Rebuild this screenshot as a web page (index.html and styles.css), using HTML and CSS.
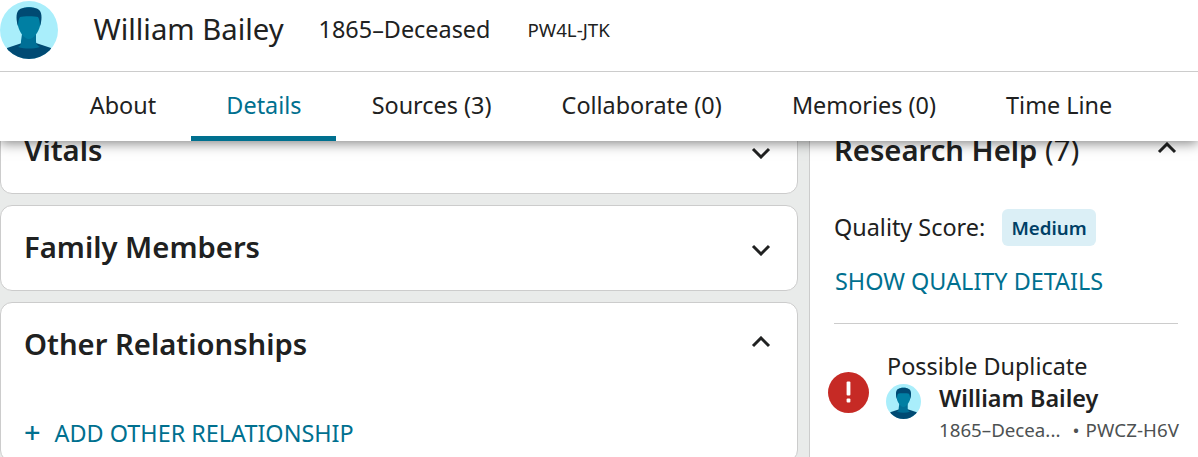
FILE: index.html
```html
<!DOCTYPE html>
<html lang="en">
<head>
  <meta charset="UTF-8">
  <meta name="viewport" content="width=device-width, initial-scale=1.0">
  <title>William Bailey</title>
  <link rel="stylesheet" href="styles.css">
</head>
<body>
  <header class="top">
    <div class="person">
      <svg class="avatar" viewBox="0 0 58 58">
        <use href="#portrait"></use>
      </svg>
      <span class="person-name">William Bailey</span>
      <span class="person-dates">1865–Deceased</span>
      <span class="person-id">PW4L-JTK</span>
    </div>
    <nav class="tabs">
      <a class="tab">About</a>
      <a class="tab tab-active">Details</a>
      <a class="tab">Sources (3)</a>
      <a class="tab">Collaborate (0)</a>
      <a class="tab">Memories (0)</a>
      <a class="tab">Time Line</a>
    </nav>
  </header>

  <main class="content">
    <div class="cards">
      <section class="card card-vitals">
        <h2>Vitals</h2>
        <svg class="chev" viewBox="0 0 20 12"><path d="M2 2l8 8 8-8"/></svg>
      </section>
      <section class="card card-family">
        <h2>Family Members</h2>
        <svg class="chev" viewBox="0 0 20 12"><path d="M2 2l8 8 8-8"/></svg>
      </section>
      <section class="card card-other">
        <div class="card-head">
          <h2>Other Relationships</h2>
          <svg class="chev" viewBox="0 0 20 12"><path d="M2 10l8-8 8 8"/></svg>
        </div>
        <a class="add-link"><span class="plus">+</span>ADD OTHER RELATIONSHIP</a>
      </section>
    </div>

    <aside class="help">
      <div class="help-head">
        <h2>Research Help <span class="count">(7)</span></h2>
        <svg class="chev" viewBox="0 0 20 12"><path d="M2 10l8-8 8 8"/></svg>
      </div>
      <div class="score">
        <span>Quality Score:</span>
        <span class="badge">Medium</span>
      </div>
      <a class="show-link">SHOW QUALITY DETAILS</a>
      <hr class="rule">
      <div class="hint">
        <svg class="alert" viewBox="0 0 41 41">
          <circle cx="20.5" cy="20.5" r="20.5" fill="#c62a25"/>
          <rect x="18.6" y="9.5" width="3.8" height="14" rx="1" fill="#fff"/>
          <rect x="18.6" y="26.5" width="3.8" height="4" rx="1" fill="#fff"/>
        </svg>
        <div class="hint-body">
          <div class="hint-title">Possible Duplicate</div>
          <div class="match">
            <svg class="avatar-small" viewBox="0 0 58 58">
              <use href="#portrait"></use>
            </svg>
            <div>
              <div class="match-name">William Bailey</div>
              <div class="match-meta">
                <span class="match-dates">1865–Decea...</span>
                <span class="match-id">• PWCZ-H6V</span>
              </div>
            </div>
          </div>
        </div>
      </div>
    </aside>
  </main>

  <svg width="0" height="0" class="defs">
    <defs>
      <clipPath id="round"><circle cx="29" cy="29" r="29"/></clipPath>
      <g id="portrait" clip-path="url(#round)">
        <rect width="58" height="58" fill="#a9eefb"/>
        <path d="M7 47c5-2 10-3 15-5h14c5 2 10 3 15 5v11H7z" fill="#004a73"/>
        <path d="M22 33h14v7c0 3 1 4 4 6-7 2-15 2-22 0 3-2 3-3 3-6z" fill="#006f96"/>
        <path d="M17 18c0-8 5-12 12-12s12 4 12 12c0 3-.4 5-1 7-1.500 6-6 13-11 13s-9.500-7-11-13c-.6-2-1-4-1-7z" fill="#007fa3"/>
        <path d="M18 25c-2-6-2-12 0-15 2-3 6-3.500 11-3.500s9 .5 11 3.500c2 3 2 9 0 15-.2-4-.5-7-2-9-3-1-15-1-18 0-1.500 2-1.800 5-2 9z" fill="#004a73"/>
      </g>
    </defs>
  </svg>
</body>
</html>
```

FILE: styles.css
```css
* {
  box-sizing: border-box;
}

html, body {
  height: 457px;
}

body {
  margin: 0;
  overflow: hidden;
  position: relative;
  background: #e9ebea;
  color: #202121;
  font-family: "Noto Sans", sans-serif;
}

h2 {
  margin: 0;
  font-size: 29.25px;
  font-weight: 600;
  line-height: 36px;
}

.defs {
  position: absolute;
}

/* Header */
.top {
  position: absolute;
  top: 0;
  left: 0;
  right: 0;
  z-index: 2;
  background: #fff;
  box-shadow: 0 2px 12px rgba(0, 0, 0, 0.5);
}

.person {
  display: flex;
  align-items: center;
  height: 72px;
  padding-bottom: 13px;
  border-bottom: 1px solid #cccccc;
}

.avatar {
  width: 58px;
  height: 58px;
  margin: 1px 35.5px 0 0;
}

.person-name {
  font-size: 29.25px;
  margin-right: 35px;
}

.person-dates {
  font-size: 23.4px;
  margin-right: 37px;
}

.person-id {
  font-size: 18.72px;
}

.tabs {
  display: flex;
  height: 69px;
  padding-left: 54.7px;
}

.tab {
  padding: 17px 35.1px 0;
  font-size: 23.4px;
  line-height: 32px;
}

.tab-active {
  margin-right: 0.6px;
  padding-right: 34.5px;
  color: #00708f;
  border-bottom: 5px solid #00708f;
}

/* Layout */
.content {
  display: flex;
  padding-top: 108px;
}

.cards {
  display: flex;
  flex-direction: column;
  gap: 11px;
  width: 798px;
  margin-right: 11px;
}

.card {
  position: relative;
  background: #fff;
  border: 1px solid #cccccc;
  border-radius: 12px;
  padding: 0 24px 0 23px;
}

.card-vitals {
  height: 86px;
  padding-top: 23px;
}

.card-family {
  height: 86px;
  padding-top: 23px;
}

.card-other {
  height: 160px;
  padding-top: 23px;
}

.card-head {
  display: flex;
  justify-content: space-between;
}

.card > .chev {
  position: absolute;
  right: 26px;
  top: 38px;
}

.card-head .chev {
  position: absolute;
  right: 26px;
  top: 33px;
}

.chev {
  width: 20px;
  height: 12px;
  fill: none;
  stroke: #202121;
  stroke-width: 3;
}

.add-link {
  display: block;
  margin-top: 55px;
  color: #00708f;
  font-size: 23.4px;
  line-height: 32px;
}

.plus {
  display: inline-block;
  width: 30.6px;
  font-size: 29px;
  font-weight: 500;
  line-height: 24px;
  vertical-align: top;
  padding-top: 3px;
}

/* Research help */
.help {
  width: 389px;
  height: 349px;
  padding: 24px 20px 0 24px;
  background: #fff;
  border-left: 1px solid #cccccc;
}

.help-head {
  display: flex;
  justify-content: space-between;
  align-items: center;
  padding-right: 1px;
}

.help-head .chev {
  margin-top: -4px;
}

.count {
  font-weight: 400;
}

.score {
  display: flex;
  align-items: center;
  gap: 17px;
  margin-top: 40px;
  font-size: 23.4px;
  line-height: 38px;
}

.badge {
  margin-top: 1px;
  padding: 0 9.2px;
  border-radius: 6px;
  background: #dbeff6;
  color: #003f66;
  font-size: 18.72px;
  font-weight: 600;
  line-height: 37px;
}

.show-link {
  display: block;
  margin: 19px 0 0 1px;
  color: #00708f;
  font-size: 23.4px;
  line-height: 32px;
}

.rule {
  margin: 26px 0 0;
  border: 0;
  border-top: 1px solid #cccccc;
}

.hint {
  display: flex;
  align-items: flex-start;
  margin-top: 26px;
  margin-left: -6px;
}

.alert {
  flex: none;
  width: 41px;
  height: 41px;
  margin: 22px 17px 0 0;
}

.hint-title {
  margin-left: 1px;
  font-size: 23.4px;
  line-height: 32px;
}

.match {
  display: flex;
  gap: 18px;
}

.avatar-small {
  flex: none;
  width: 35px;
  height: 35px;
  margin-top: 2px;
}

.match-name {
  font-size: 23.4px;
  font-weight: 600;
  line-height: 32px;
}

.match-meta {
  display: flex;
  gap: 12px;
  margin-top: 4px;
  color: #4d5152;
  font-size: 18.72px;
  line-height: 24px;
  white-space: nowrap;
}

.match-id {
  word-spacing: 1px;
  letter-spacing: 0.1px;
}
```
